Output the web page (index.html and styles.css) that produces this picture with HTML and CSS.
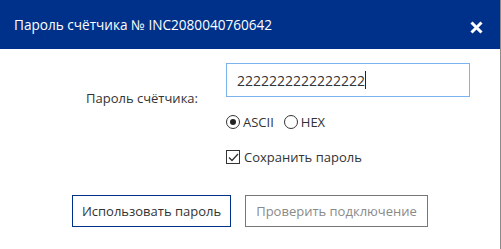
FILE: index.html
```html
<!DOCTYPE html>
<html lang="ru">
<head>
    <meta charset="UTF-8">
    <title>Пароль счётчика</title>
    <link rel="stylesheet" href="styles.css">
</head>
<body>
    <div class="dialog">
        <div class="dialog-header">
            <span class="dialog-title">Пароль счётчика № INC2080040760642</span>
            <span class="close-button">
                <svg width="13" height="13" viewBox="0 0 13 13"><path d="M1.5 1.5 L11.5 11.5 M11.5 1.5 L1.5 11.5" stroke="#fff" stroke-width="3"/></svg>
            </span>
        </div>

        <div class="dialog-body">
            <div class="form-row">
                <label class="field-label">Пароль счётчика:</label>
                <div class="field-controls">
                    <div class="text-input">2222222222222222<span class="caret"></span></div>
                    <div class="radio-group">
                        <span class="option"><span class="radio checked"></span>ASCII</span>
                        <span class="option"><span class="radio"></span>HEX</span>
                    </div>
                    <div class="option save-option">
                        <span class="checkbox">
                            <svg width="11" height="9" viewBox="0 0 11 9"><path d="M1 4.5 L4 7.5 L10 1" fill="none" stroke="#333" stroke-width="1.3"/></svg>
                        </span>
                        Сохранить пароль
                    </div>
                </div>
            </div>

            <div class="button-row">
                <button class="dlg-button primary">Использовать пароль</button>
                <button class="dlg-button disabled">Проверить подключение</button>
            </div>
        </div>
    </div>
</body>
</html>
```

FILE: styles.css
```css
/* password dialog */

:root {
    --header-color: #00318a;
    --text-color: #333333;
    --input-border: #7ab4ee;
    --muted-color: #8a8a8a;
}

body {
    margin: 0;
    font-family: 'Open Sans', 'Noto Sans', sans-serif;
    font-size: 13px;
    color: var(--text-color);
    background: #ffffff;
    overflow: hidden;
}

.dialog {
    width: 500px;
    height: 249px;
    border-right: 1px solid #8c8c8c;
}

/* --- Header --- */
.dialog-header {
    height: 49px;
    background-color: var(--header-color);
    color: #ffffff;
    display: flex;
    align-items: center;
    justify-content: space-between;
    padding: 0 17px 0 14px;
}

.dialog-title {
    font-size: 13.6px;
}

.close-button {
    display: flex;
    margin-top: 6px;
}

/* --- Form --- */
.dialog-body {
    padding: 14px 0 0 72px;
}

.form-row {
    display: flex;
    align-items: flex-start;
}

.field-label {
    width: 140px;
    padding-left: 14px;
    margin-top: 26px;
}

.field-controls {
    display: flex;
    flex-direction: column;
}

.text-input {
    width: 232px;
    height: 32px;
    border: 1px solid var(--input-border);
    padding-left: 10px;
    display: flex;
    align-items: center;
    font-size: 14px;
}

.caret {
    display: inline-block;
    width: 1px;
    height: 18px;
    background: #222;
}

.radio-group {
    display: flex;
    gap: 10px;
    margin-top: 16px;
}

.option {
    display: flex;
    align-items: center;
}

.radio {
    width: 12px;
    height: 12px;
    border: 1px solid #333;
    border-radius: 50%;
    margin-right: 3px;
    position: relative;
}

.radio.checked::after {
    content: "";
    position: absolute;
    left: 3px;
    top: 3px;
    width: 6px;
    height: 6px;
    border-radius: 50%;
    background: #222;
}

.save-option {
    margin-top: 17px;
}

.checkbox {
    width: 12px;
    height: 12px;
    border: 1px solid #333;
    margin-right: 4px;
    display: flex;
    align-items: center;
    justify-content: center;
}

/* --- Buttons --- */
.button-row {
    display: flex;
    gap: 14px;
    margin-top: 29px;
}

.dlg-button {
    height: 32px;
    background: #ffffff;
    font-family: inherit;
    font-size: 13px;
    padding: 0;
    white-space: nowrap;
}

.dlg-button.primary {
    width: 159px;
    border: 1px solid var(--header-color);
    color: var(--text-color);
}

.dlg-button.disabled {
    width: 183px;
    border: 1px solid #777777;
    color: var(--muted-color);
}
```
